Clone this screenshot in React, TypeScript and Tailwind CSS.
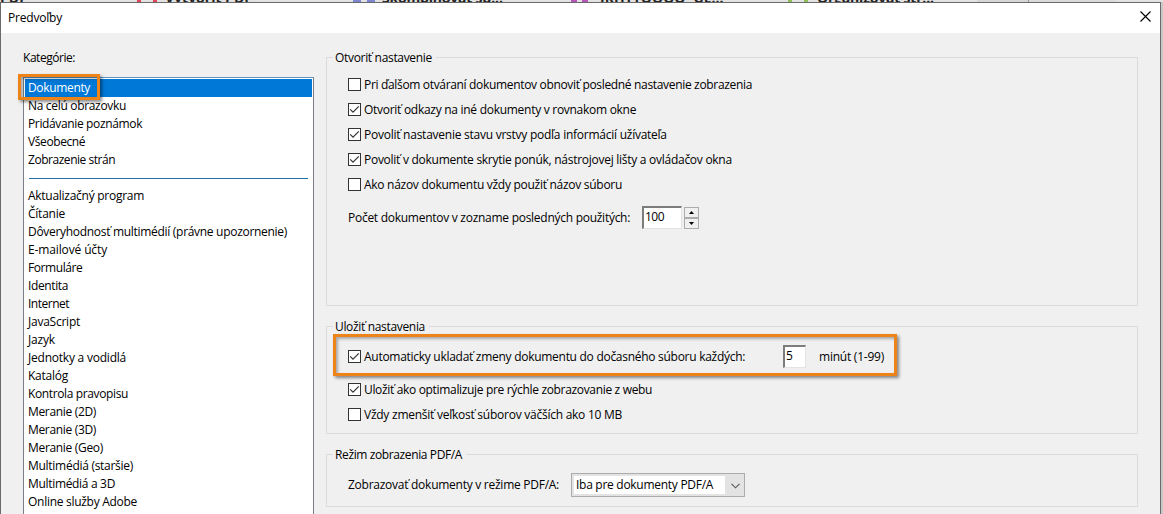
import type { ReactNode } from "react";
import clsx from "clsx";

type Item = { label: string; tracking: string };

const mainCategories: Item[] = [
  { label: "Dokumenty", tracking: "tracking-[-0.34px]" },
  { label: "Na celú obrazovku", tracking: "tracking-[-0.32px]" },
  { label: "Pridávanie poznámok", tracking: "tracking-[-0.36px]" },
  { label: "Všeobecné", tracking: "tracking-[-0.4px]" },
  { label: "Zobrazenie strán", tracking: "tracking-[-0.46px]" },
];

const otherCategories: Item[] = [
  { label: "Aktualizačný program", tracking: "tracking-[-0.27px]" },
  { label: "Čítanie", tracking: "tracking-[-0.24px]" },
  { label: "Dôveryhodnosť multimédií (právne upozornenie)", tracking: "tracking-[-0.3px]" },
  { label: "E-mailové účty", tracking: "tracking-[-0.13px]" },
  { label: "Formuláre", tracking: "tracking-[-0.42px]" },
  { label: "Identita", tracking: "tracking-[-0.38px]" },
  { label: "Internet", tracking: "tracking-[-0.48px]" },
  { label: "JavaScript", tracking: "tracking-[-0.24px]" },
  { label: "Jazyk", tracking: "tracking-[-0.17px]" },
  { label: "Jednotky a vodidlá", tracking: "tracking-[-0.22px]" },
  { label: "Katalóg", tracking: "tracking-[-0.25px]" },
  { label: "Kontrola pravopisu", tracking: "tracking-[-0.37px]" },
  { label: "Meranie (2D)", tracking: "tracking-[-0.33px]" },
  { label: "Meranie (3D)", tracking: "tracking-[-0.33px]" },
  { label: "Meranie (Geo)", tracking: "tracking-[-0.32px]" },
  { label: "Multimédiá (staršie)", tracking: "tracking-[-0.28px]" },
  { label: "Multimédiá a 3D", tracking: "tracking-[-0.32px]" },
  { label: "Online služby Adobe", tracking: "tracking-[-0.28px]" },
];

const openOptions = [
  { label: "Pri ďalšom otváraní dokumentov obnoviť posledné nastavenie zobrazenia", tracking: "tracking-[-0.33px]", checked: false },
  { label: "Otvoriť odkazy na iné dokumenty v rovnakom okne", tracking: "tracking-[-0.28px]", checked: true },
  { label: "Povoliť nastavenie stavu vrstvy podľa informácií užívateľa", tracking: "tracking-[-0.25px]", checked: true },
  { label: "Povoliť v dokumente skrytie ponúk, nástrojovej lišty a ovládačov okna", tracking: "tracking-[-0.27px]", checked: true },
  { label: "Ako názov dokumentu vždy použiť názov súboru", tracking: "tracking-[-0.28px]", checked: false },
];

function CategoryRow({ label, tracking, selected }: Item & { selected?: boolean }) {
  return (
    <li className={clsx("h-[18px] pl-[3px]", tracking, selected && "bg-[#0078d7] text-white")}>
      {label}
    </li>
  );
}

function CheckRow({ label, tracking, checked }: Item & { checked: boolean }) {
  return (
    <div className="flex h-[25px] items-center">
      <span className="mr-[3px] size-[13px] shrink-0 border border-[#333] bg-white">
        {checked && (
          <svg viewBox="0 0 11 11" className="size-[11px]" fill="none" stroke="#333" strokeWidth="1.2">
            <path d="M1.2 5.4 4 8.2 9.8 2.4" />
          </svg>
        )}
      </span>
      <span className={tracking}>{label}</span>
    </div>
  );
}

function Group({ title, tracking, className, children }: { title: string; tracking: string; className: string; children: ReactNode }) {
  return (
    <section className={clsx("w-[812px] border border-[#dcdcdc]", className)}>
      <h2 className={clsx("-mt-[9px] ml-1.5 h-[18px] w-fit bg-[#f0f0f0] pr-1 pl-0.5", tracking)}>{title}</h2>
      <div className="pl-[21px]">{children}</div>
    </section>
  );
}

function NumberBox({ value, className }: { value: string; className: string }) {
  return (
    <span className={clsx("h-[23px] border-t-2 border-l-2 border-r border-b border-t-[#7c7c7c] border-l-[#7c7c7c] border-r-[#e3e3e3] border-b-[#e3e3e3] bg-white pl-px leading-[17px] tracking-[-0.5px]", className)}>
      {value}
    </span>
  );
}

function SpinButton({ path }: { path: string }) {
  return (
    <span className="flex h-[11px] w-[15px] items-center justify-center border border-[#acacac] bg-[#f0f0f0]">
      <svg viewBox="0 0 5 3" className="h-[3px] w-[5px]">
        <path d={path} fill="#000" />
      </svg>
    </span>
  );
}

// Toolbar of the window behind the dialog, only its lowest pixels are visible
function ToolbarStrip() {
  return (
    <div className="flex h-0.5 shrink-0 items-end overflow-hidden bg-[#e2e2e2] text-[14px] leading-[14px] font-bold text-[#222] *:shrink-0">
      <span className="w-[137px] translate-y-[3px]">PDF</span>
      <span className="mr-2 h-0.5 w-5 border-x-4 border-[#e0455a]" />
      <span className="w-[188px] translate-y-[3px]">Vytvoriť PDF</span>
      <span className="mr-[7px] h-0.5 w-[22px] border-x-8 border-[#7d85d0]" />
      <span className="w-[189px] translate-y-[3px] tracking-[-0.2px]">Skombinovať sú...</span>
      <span className="mr-3 h-0.5 w-[17px] border-x-[6px] border-[#b455b8]" />
      <span className="w-[188px] translate-y-[3px]">JKHTTOOOO- GE...</span>
      <span className="mr-[9px] h-0.5 w-5 border-x-4 border-[#8dbf55]" />
      <span className="w-40 translate-y-[3px] tracking-[-0.2px]">Organizovať str...</span>
      <span className="h-0.5 w-[52px] border-r border-[#999] bg-[#d6d6d6]" />
      <span className="h-0.5 w-[87px] bg-[#dadada]" />
    </div>
  );
}

export default function App() {
  return (
    <div className="flex h-[514px] w-[1163px] flex-col overflow-hidden bg-[#c8c8c8] font-['Open_Sans','Noto_Sans',sans-serif] text-[12px] leading-[18px] text-black">
      <ToolbarStrip />
      <main className="flex min-h-0 w-[1161px] flex-1 flex-col overflow-hidden border-x border-t border-[#6a6a6a] bg-[#f0f0f0]">
        <header className="flex h-[30px] shrink-0 items-center justify-between bg-white pr-[9px] pl-[7px]">
          <h1 className="tracking-[-0.2px]">Predvoľby</h1>
          <svg viewBox="0 0 11 11" className="mb-[3px] size-[11px]" stroke="#000" strokeWidth="1.1">
            <path d="M.5.5l10 10M10.5.5l-10 10" />
          </svg>
        </header>

        <div className="flex gap-3 pl-[22px]">
          <nav className="w-[291px] pt-4">
            <p className="tracking-[-0.46px]">
              Kate<span className="underline underline-offset-2">g</span>órie:
            </p>
            <div className="relative mt-[10px] h-[460px] border border-[#7a7f87] border-t-[#5f93c2] bg-white p-px">
              <ul>
                {mainCategories.map((c, i) => (
                  <CategoryRow key={c.label} {...c} selected={i === 0} />
                ))}
                <li className="flex h-[18px] items-center pr-1 pl-1">
                  <span className="h-px w-full bg-[#1f6fa8]" />
                </li>
                {otherCategories.map((c) => (
                  <CategoryRow key={c.label} {...c} />
                ))}
              </ul>
              <div className="absolute -top-1 -left-1.5 h-[26px] w-[82px] border-[3px] border-[#ee8418] shadow-[2px_2px_3px_rgba(0,0,0,0.45),inset_2px_2px_3px_rgba(0,0,0,0.3)]" />
            </div>
          </nav>

          <div className="flex flex-col gap-5 pt-6">
            <Group title="Otvoriť nastavenie" tracking="tracking-[-0.32px]" className="h-[249px]">
              <div className="pt-[5px]">
                {openOptions.map((o) => (
                  <CheckRow key={o.label} {...o} />
                ))}
              </div>
              <div className="mt-[9px] flex">
                <span className="w-[294px] pt-[3px] tracking-[-0.27px]">Počet dokumentov v zozname posledných použitých:</span>
                <NumberBox value="100" className="mr-0.5 w-10" />
                <span className="mt-px flex flex-col">
                  <SpinButton path="M2.5 0 5 3H0z" />
                  <SpinButton path="M0 0h5L2.5 3z" />
                </span>
              </div>
            </Group>

            <Group title="Uložiť nastavenia" tracking="tracking-[-0.33px]" className="h-[108px]">
              <div className="relative mt-2 flex items-center">
                <div className="w-[435px]">
                  <CheckRow label="Automaticky ukladať zmeny dokumentu do dočasného súboru každých:" tracking="tracking-[-0.28px]" checked />
                </div>
                <NumberBox value="5" className="mr-[13px] w-[23px]" />
                <span className="tracking-[-0.23px]">minút (1-99)</span>
                <div className="absolute -top-[10px] -left-[15px] h-[42px] w-[564px] border-[3px] border-[#ee8418] shadow-[2px_2px_3px_rgba(0,0,0,0.45),inset_2px_2px_3px_rgba(0,0,0,0.3)]" />
              </div>
              <div className="mt-2">
                <CheckRow label="Uložiť ako optimalizuje pre rýchle zobrazovanie z webu" tracking="tracking-[-0.33px]" checked />
                <CheckRow label="Vždy zmenšiť veľkosť súborov väčších ako 10 MB" tracking="tracking-[-0.25px]" checked={false} />
              </div>
            </Group>

            <Group title="Režim zobrazenia PDF/A" tracking="tracking-[-0.38px]" className="h-[53px]">
              <div className="mt-[9px] flex items-center">
                <span className="w-[223px] tracking-[-0.26px]">Zobrazovať dokumenty v režime PDF/A:</span>
                <span className="flex h-6 w-[174px] border border-[#acacac] bg-[#e3e3e3] p-0.5">
                  <span className="w-[151px] bg-white pl-0.5 tracking-[-0.28px]">Iba pre dokumenty PDF/A</span>
                  <svg viewBox="0 0 9 6" className="mt-[7px] ml-[6px] h-1.5 w-[9px]" fill="none" stroke="#555" strokeWidth="1.1">
                    <path d="M.5.8l4 4 4-4" />
                  </svg>
                </span>
              </div>
            </Group>
          </div>
        </div>
      </main>
    </div>
  );
}
